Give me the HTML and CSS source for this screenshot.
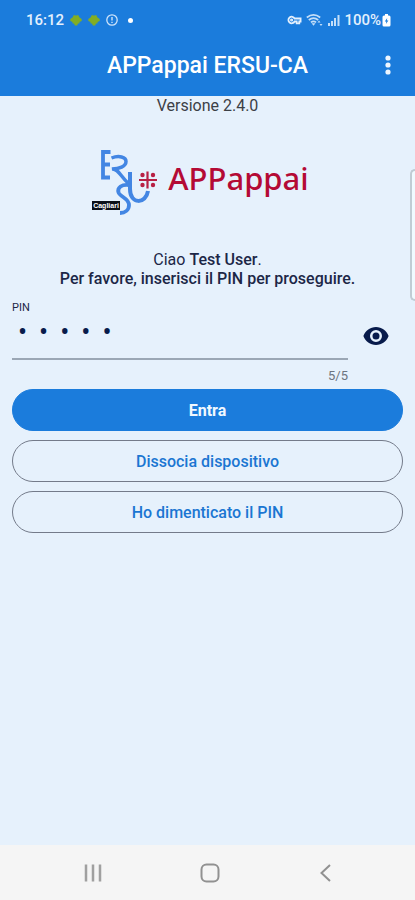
FILE: index.html
```html
<!DOCTYPE html>
<html lang="it">
<head>
<meta charset="utf-8">
<meta name="viewport" content="width=device-width, initial-scale=1">
<title>APPappai ERSU-CA</title>
<link rel="stylesheet" href="styles.css">
</head>
<body>
<div class="screen">
  <header class="top">
    <div class="status">
      <div class="status-group">
        <span class="clock">16:12</span>
        <svg class="glyph" width="12" height="12" viewBox="0 0 12 12"><path fill="#82ad24" d="M2.500 3.500 4 .8l1 .7h2l1-.7 1.500 2.700L11.700 5v2L9.500 8v1.500H8l-.8 2H4.800l-.8-2H2.500V8L.3 7V5z"/></svg>
        <svg class="glyph" width="12" height="12" viewBox="0 0 12 12"><path fill="#82ad24" d="M2.500 3.500 4 .8l1 .7h2l1-.7 1.500 2.700L11.700 5v2L9.500 8v1.500H8l-.8 2H4.800l-.8-2H2.500V8L.3 7V5z"/></svg>
        <svg class="glyph" width="12" height="12" viewBox="0 0 12 12" fill="none" stroke="#cfe4fa"><circle cx="6" cy="6" r="5.200" stroke-width="1.300"/><path d="M6 3v3.500M6 7.800V9" stroke-width="1.400"/></svg>
        <span class="more-dot"></span>
      </div>
      <div class="status-group right">
        <svg width="15" height="12" viewBox="0 0 16 12" fill="none" stroke="#e4f0fd" stroke-width="1.900"><path d="M8.100 4.400A3.500 3.500 0 1 0 8.100 7.600h2.200v1.900h2.800V7.600h1.400V4.400z"/><circle cx="4.900" cy="6" r=".7"/></svg>
        <svg width="17" height="14" viewBox="0 0 17 14" fill="none" stroke="#c4def8" stroke-width="1.700"><path d="M.8 4.500q6.700-5.400 13.400 0M2.800 7q4.700-3.800 9.400 0M4.900 9.300q2.600-2 5.200 0"/><path fill="#c4def8" stroke="none" d="m7.500 12.700-2-2.500h4zM13 7.500l1.500 2h-3zM15 13l-1.500-2h3z"/></svg>
        <svg width="13" height="13" viewBox="0 0 13 13" stroke="#c4def8" stroke-width="2"><path d="M2 9v3M5 7v5M8 4v8M11.500 1v11"/></svg>
        <span class="charge">100%</span>
        <svg width="9" height="13" viewBox="0 0 9 13"><path fill="#fff" d="M3 0h3v1.500h1q1.500 0 1.500 1.500v8q0 1.500-1.500 1.500H2Q.5 12.500.5 11V3Q.5 1.500 2 1.500h1z"/><path fill="#1b7cdc" d="M5.200 4 2.800 7.500h1.500l-.4 2.500 2.500-3.500H4.900z"/></svg>
      </div>
    </div>
    <div class="appbar">
      <h1>APPappai ERSU-CA</h1>
      <button class="menu" type="button" aria-label="Menu"><svg width="6" height="20" viewBox="0 0 6 20" fill="#eef6ff"><circle cx="3" cy="3" r="2.600"/><circle cx="3" cy="10" r="2.600"/><circle cx="3" cy="17" r="2.600"/></svg></button>
    </div>
  </header>

  <main>
    <p class="version">Versione 2.4.0</p>
    <div class="brand">
      <svg class="ersu" width="66" height="68" viewBox="0 0 66 68" fill="none">
        <g stroke="#4386e3">
          <path d="M18.500 4H11V29.500H18M11 16.500h7" stroke-width="3.800"/>
          <path d="M19.500 10C27 7 34 9 34 13.500c0 5-7 7.500-14 7.500 6-1 9 8 16 14" stroke-width="3.500"/>
          <path d="M38 24v17c0 16 16 15 18 2" stroke-width="4"/>
          <path d="M37 37c-7-1-12 2.500-10.500 7.500C28 49 37 50 37 57c0 5-4 8-9 8" stroke-width="3.800"/>
        </g>
        <path d="M55.500 23.500v17M47 32h18" stroke="#b82044" stroke-width="2.200"/>
        <g fill="#b82044"><circle cx="50.500" cy="27" r="2.200"/><circle cx="61" cy="27" r="2.200"/><circle cx="50.500" cy="37" r="2.200"/><circle cx="61" cy="37" r="2.200"/></g>
        <path fill="#0b0f18" d="M0 53h28v9H0z"/>
        <text class="city" x="14" y="60" text-anchor="middle">Cagliari</text>
      </svg>
      <span class="wordmark">APPappai</span>
    </div>
    <p class="greeting">Ciao <strong>Test User</strong>.<br><span>Per favore, inserisci il PIN per proseguire.</span></p>

    <form class="login">
      <div class="pin-row">
        <div class="field">
          <label for="pin">PIN</label>
          <input id="pin" type="password" value="12345" maxlength="5" inputmode="numeric" autocomplete="off">
          <span class="count">5/5</span>
        </div>
        <button class="eye" type="button" aria-label="Mostra PIN"><svg width="26" height="18" viewBox="0 0 26 18"><path fill="#081b4b" fill-rule="evenodd" d="M13 0C7.200 0 2.400 3.600.4 9c2 5.400 6.800 9 12.600 9s10.600-3.600 12.600-9C23.600 3.600 18.800 0 13 0zm0 15a6 6 0 1 1 0-12 6 6 0 0 1 0 12zm0-9.500a3.500 3.500 0 1 0 0 7 3.500 3.500 0 0 0 0-7z"/></svg></button>
      </div>
      <button class="pill primary" type="button">Entra</button>
      <button class="pill" type="button">Dissocia dispositivo</button>
      <button class="pill" type="button">Ho dimenticato il PIN</button>
    </form>
  </main>
  <div class="edge-handle"></div>

  <nav>
    <button type="button" aria-label="Recenti"><svg width="20" height="20" viewBox="0 0 20 20" stroke="#a0a0a0" stroke-width="2.500"><path d="M3 1.500v17M10 1.500v17M17 1.500v17"/></svg></button>
    <button type="button" aria-label="Home"><svg width="20" height="20" viewBox="0 0 20 20" fill="none" stroke="#919191" stroke-width="2"><rect x="1.500" y="1.500" width="17" height="17" rx="5"/></svg></button>
    <button type="button" aria-label="Indietro"><svg width="20" height="20" viewBox="0 0 20 20" fill="none" stroke="#919191" stroke-width="2"><path d="m14 2-8.500 8 8.500 8"/></svg></button>
  </nav>
</div>
</body>
</html>
```
FILE: styles.css
```css
* {
  box-sizing: border-box;
}

body {
  margin: 0;
  font-family: Roboto, "Liberation Sans", sans-serif;
  font-size: 16px;
  background: #e6f1fc;
  color: #1c2747;
}

h1,
p {
  margin: 0;
}

button {
  margin: 0;
  padding: 0;
  border: 0;
  background: none;
  font: inherit;
  color: inherit;
}

svg {
  display: block;
  flex: none;
}

.screen {
  position: relative;
  display: flex;
  flex-direction: column;
  min-height: 100vh;
}

.top {
  background: #1b7cdc;
  color: #fff;
}

.status {
  display: flex;
  justify-content: space-between;
  height: 40px;
  padding: 0 24px 0 26px;
}

.status-group {
  display: flex;
  align-items: center;
  gap: 6px;
  font-size: 15px;
  font-weight: 500;
  color: #e4f0fd;
}

.status-group.right {
  gap: 4px;
}

.right .charge {
  margin-right: -3px;
}

.more-dot {
  width: 5px;
  height: 5px;
  margin-left: 4px;
  border-radius: 50%;
  background: #fff;
}

.appbar {
  display: grid;
  grid-template-columns: 40px 1fr 40px;
  align-items: center;
  height: 56px;
  padding: 0 8px;
  padding-bottom: 6px;
}

.appbar h1 {
  grid-column: 2;
  text-align: center;
  font-size: 23px;
  font-weight: 500;
}

.menu {
  display: grid;
  place-items: center;
  height: 40px;
  padding-left: 2px;
}

main {
  flex: 1;
  padding: 0 12px;
}

.version {
  text-align: center;
  line-height: 20px;
  color: #3c4046;
}

.brand {
  display: flex;
  align-items: center;
  justify-content: center;
  gap: 10px;
  height: 68px;
  margin-top: 32px;
  padding-right: 14px;
}

.city {
  font-family: "Liberation Sans", sans-serif;
  font-size: 7px;
  font-weight: 700;
  fill: #fff;
}

.wordmark {
  padding-bottom: 8px;
  font-family: "Noto Sans", sans-serif;
  font-size: 31px;
  font-weight: 500;
  line-height: 40px;
  color: #b40a35;
}

.greeting {
  margin-top: 34px;
  text-align: center;
  line-height: 19px;
}

.greeting strong,
.greeting span {
  font-weight: 500;
}

.login {
  display: flex;
  flex-direction: column;
  gap: 9px;
  margin-top: 12px;
}

.pin-row {
  display: flex;
  gap: 15px;
}

.field {
  flex: 1;
  display: flex;
  flex-direction: column;
}

.field label {
  font-size: 11px;
  line-height: 16px;
}

.field input {
  width: 100%;
  height: 44px;
  padding: 0 0 10px 6px;
  border: 0;
  border-bottom: 2px solid #9ba7b5;
  border-radius: 0;
  outline: 0;
  background: none;
  font-family: Roboto, sans-serif;
  font-size: 27px;
  letter-spacing: 12px;
  color: #081b4b;
}

.count {
  text-align: right;
  font-size: 13px;
  line-height: 20px;
  padding-top: 6px;
  height: 20px;
  color: #6c747f;
}

.eye {
  display: grid;
  place-items: center;
  width: 26px;
  height: 72px;
  margin-right: 14px;
}

.pill {
  height: 42px;
  border: 1px solid #747b8a;
  border-radius: 21px;
  font-weight: 500;
  color: #1b76d2;
}

.pill.primary {
  border-color: #1b7cdc;
  background: #1b7cdc;
  font-weight: 700;
  color: #f1f8ff;
}

.edge-handle {
  position: absolute;
  top: 169px;
  right: 0;
  width: 5px;
  height: 132px;
  border: 2px solid #c0ccd4;
  border-right: 0;
  border-radius: 5px 0 0 5px;
  background: #f0faff;
}

nav {
  display: flex;
  justify-content: space-between;
  align-items: center;
  height: 55px;
  padding: 0 79px 0 83px;
  background: #f5f5f5;
}
```
